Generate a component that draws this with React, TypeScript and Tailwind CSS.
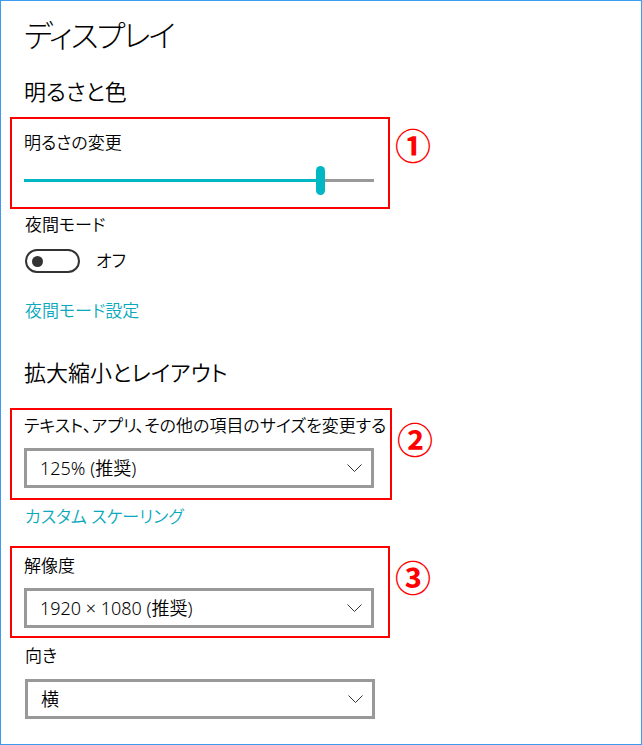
import React from "react";

const jp = "font-['Noto_Sans','Noto_Sans_CJK_JP',sans-serif] [font-feature-settings:'palt']";

const Chevron = () => (
  <svg width="15" height="8" viewBox="0 0 15 8" className="shrink-0">
    <path d="M0.5 0.5 L7.5 7.5 L14.5 0.5" fill="none" stroke="#333" strokeWidth="1" />
  </svg>
);

const Dropdown = ({ value }: { value: string }) => (
  <div className="flex h-[40px] w-[350px] items-center justify-between border-[3px] border-[#999999] pl-[13px] pr-[9px]">
    <span className="text-[18px] font-[350] leading-none text-black">{value}</span>
    <Chevron />
  </div>
);

const Mark = ({ n, top }: { n: string; top: string }) => (
  <span className={`ml-[5px] text-[36px] font-bold leading-none text-[#ff0000] ${top}`}>{n}</span>
);

export default function App() {
  return (
    <div className={`h-[745px] w-[642px] overflow-hidden border border-[#3c9cf0] bg-white text-black font-[350] ${jp}`}>
      <div className="flex flex-col pl-[9px]">
        <h1 className="mt-[14px] h-[40px] pl-[14px] text-[31px] font-light leading-[40px] tracking-[-2px]">ディスプレイ</h1>

        <h2 className="mt-[21px] h-[30px] pl-[14px] text-[22px] leading-[30px]">明るさと色</h2>

        {/* 1 */}
        <div className="mt-[11px] flex items-start">
          <div className="h-[92px] w-[380px] border-2 border-[#ff0000] pl-[12px] pt-[13px]">
            <p className="h-[22px] text-[17px] leading-[22px]">明るさの変更</p>
            <div className="mt-[11px] flex h-[30px] w-[350px] items-center">
              <div className="h-[3px] w-[292px] bg-[#00b7c3]" />
              <div className="h-[29px] w-[9px] rounded-full bg-[#00b7c3]" />
              <div className="h-[3px] flex-1 bg-[#999999]" />
            </div>
          </div>
          <Mark n="①" top="mt-[12px]" />
        </div>

        <p className="mt-[5px] h-[22px] pl-[15px] text-[17px] leading-[22px]">夜間モード</p>

        <div className="mt-[13px] flex items-center pl-[15px]">
          <div className="flex h-[24px] w-[55px] items-center rounded-full border-2 border-[#333333] pl-[5px]">
            <div className="h-[11px] w-[11px] rounded-full bg-[#333333]" />
          </div>
          <span className="ml-[16px] text-[17px] leading-[22px]">オフ</span>
        </div>

        <a className="mt-[27px] h-[22px] pl-[15px] text-[17px] leading-[22px] text-[#0aa8bc]">夜間モード設定</a>

        <h2 className="mt-[35px] h-[30px] pl-[14px] text-[22px] leading-[30px]">拡大縮小とレイアウト</h2>

        {/* 2 */}
        <div className="mt-[21px] flex items-start">
          <div className="h-[92px] w-[382px] border-2 border-[#ff0000] pl-[12px] pt-[5px]">
            <p className="h-[22px] whitespace-nowrap text-[17px] leading-[22px]">テキスト、アプリ、その他の項目のサイズを変更する</p>
            <div className="mt-[11px]">
              <Dropdown value="125% (推奨)" />
            </div>
          </div>
          <Mark n="②" top="mt-[15px]" />
        </div>

        <a className="mt-[6px] h-[22px] pl-[15px] text-[17px] leading-[22px] text-[#0aa8bc]">カスタム スケーリング</a>

        {/* 3 */}
        <div className="mt-[18px] flex items-start">
          <div className="h-[92px] w-[380px] border-2 border-[#ff0000] pl-[12px] pt-[7px]">
            <p className="h-[22px] text-[17px] leading-[22px]">解像度</p>
            <div className="mt-[11px]">
              <Dropdown value="1920 × 1080 (推奨)" />
            </div>
          </div>
          <Mark n="③" top="mt-[15px]" />
        </div>

        <p className="mt-[7px] h-[22px] pl-[15px] text-[17px] leading-[22px]">向き</p>

        <div className="mt-[12px] pl-[15px]">
          <Dropdown value="横" />
        </div>
      </div>
    </div>
  );
}
